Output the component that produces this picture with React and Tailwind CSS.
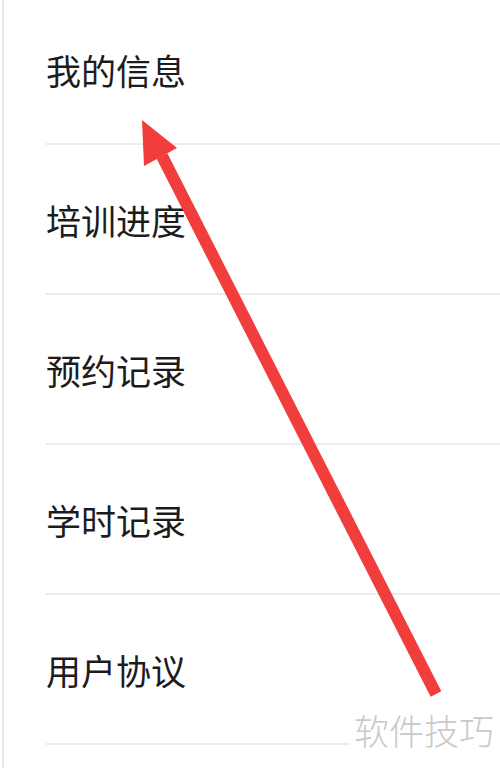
// App.jsx - settings list with a red pointer arrow over it
const items = ["我的信息", "培训进度", "预约记录", "学时记录", "用户协议"];

export default function App() {
  return (
    <div className="relative w-[500px] h-[768px] overflow-hidden bg-white" style={{ fontFamily: '"Noto Sans CJK SC", "Noto Sans", sans-serif' }}>
      {/* thin gray edge on the left */}
      <div className="flex h-full pl-[2px]">
        <div className="flex-1 border-l-2 border-[#e9e9e9]">
          <ul className="-mt-[5px]">
            {items.map((label) => (
              <li key={label} className="ml-[42px] h-[150px] border-b-2 border-[#ececec] pt-[55px]">
                <span className="block text-[35px] leading-[40px] text-[#1c1c1e]">{label}</span>
              </li>
            ))}
          </ul>
        </div>
      </div>

      {/* red arrow pointing at the first item */}
      <svg className="absolute inset-0 pointer-events-none" width="500" height="768" viewBox="0 0 500 768">
        <line x1="162" y1="156" x2="436" y2="694" stroke="#f23d3d" strokeWidth="12" />
        <polygon points="142,120 177,148 144,166" fill="#f23d3d" />
      </svg>

      {/* watermark */}
      <div className="absolute left-[350px] top-[708px] bg-white pl-[4px] pr-[6px] text-[35px] leading-[44px] font-light text-[#c9c9c9]">
        软件技巧
      </div>
    </div>
  );
}
